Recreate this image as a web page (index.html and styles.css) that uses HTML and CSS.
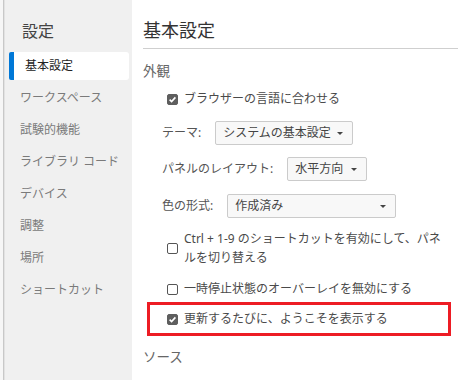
FILE: index.html
```html
<!DOCTYPE html>
<html>
  <head>
    <meta charset="utf-8">
    <title>設定</title>
    <link rel="stylesheet" href="styles.css">
  </head>
  <body>
    <div class="edge"></div>

    <nav class="sidebar">
      <h2 class="side-title">設定</h2>
      <ul class="side-list">
        <li class="side-item active">基本設定</li>
        <li class="side-item">ワークスペース</li>
        <li class="side-item">試験的機能</li>
        <li class="side-item">ライブラリ コード</li>
        <li class="side-item">デバイス</li>
        <li class="side-item">調整</li>
        <li class="side-item">場所</li>
        <li class="side-item">ショートカット</li>
      </ul>
    </nav>

    <main class="main">
      <h1 class="main-title">基本設定</h1>

      <h3 class="section">外観</h3>

      <div class="row row-first">
        <span class="box checked"><svg viewBox="0 0 11 11"><path d="M2.6 5.6 L4.6 7.6 L8.4 3.4" /></svg></span>
        <span class="text">ブラウザーの言語に合わせる</span>
      </div>

      <div class="row row-field">
        <span class="label">テーマ:</span>
        <div class="select select-theme"><span>システムの基本設定</span><i class="caret"></i></div>
      </div>

      <div class="row row-field">
        <span class="label">パネルのレイアウト:</span>
        <div class="select select-layout"><span>水平方向</span><i class="caret"></i></div>
      </div>

      <div class="row row-field row-color">
        <span class="label">色の形式:</span>
        <div class="select select-color"><span>作成済み</span><i class="caret"></i></div>
      </div>

      <div class="row row-wrap">
        <span class="box"></span>
        <span class="text">Ctrl + 1-9 のショートカットを有効にして、パネ<br>ルを切り替える</span>
      </div>

      <div class="row row-pause">
        <span class="box"></span>
        <span class="text">一時停止状態のオーバーレイを無効にする</span>
      </div>

      <div class="highlight">
        <span class="box checked"><svg viewBox="0 0 11 11"><path d="M2.6 5.6 L4.6 7.6 L8.4 3.4" /></svg></span>
        <span class="text">更新するたびに、ようこそを表示する</span>
      </div>

      <h3 class="section section-source">ソース</h3>
    </main>
  </body>
</html>
```

FILE: styles.css
```css
html, body {
  margin: 0;
  height: 380px;
  overflow: hidden;
}
body {
  display: flex;
  background: #fff;
  font-family: "Noto Sans", "Noto Sans CJK JP", sans-serif;
  font-size: 12px;
  color: #4a4a4a;
}
.edge {
  width: 3px;
  background: #f6f6f6;
  border-right: 1px solid #c8c8c8;
  flex-shrink: 0;
}

/* sidebar */
.sidebar {
  width: 120px;
  flex-shrink: 0;
  background: #f0f0f0;
  padding: 0 3px 0 4px;
  border-left: 1px solid #e2e2e2;
}
.side-title {
  margin: 0;
  padding: 19px 0 0 13px;
  height: 33px;
  box-sizing: border-box;
  font-size: 16px;
  line-height: 24px;
  font-weight: normal;
  color: #444;
}
.side-list {
  list-style: none;
  margin: 0;
  padding: 0;
  display: flex;
  flex-direction: column;
  gap: 4px;
  margin-top: 19px;
}
.side-item {
  height: 28px;
  line-height: 28px;
  padding-left: 11px;
  color: #7a7a7a;
  border-radius: 2px;
  white-space: nowrap;
}
.side-item.active {
  background: #fff;
  color: #222;
  border-left: 5px solid #0078d7;
  border-radius: 2px 3px 3px 2px;
}

/* main panel */
.main {
  flex: 1;
  padding-left: 11px;
}
.main-title {
  margin: 0;
  padding-top: 18px;
  padding-bottom: 6px;
  line-height: 24px;
  font-size: 18px;
  font-weight: normal;
  color: #333;
  border-bottom: 1px solid #cfcfcf;
}
.section {
  margin: 12px 0 0;
  font-size: 13.5px;
  line-height: 20px;
  font-weight: normal;
  color: #666;
}
.section-source {
  margin-top: 11px;
}
.row {
  display: flex;
  align-items: center;
  padding-left: 19px;
  line-height: 20px;
}
.row-first {
  margin-top: 8px;
}
.row-field {
  margin-top: 12px;
  height: 24px;
}
.row-color {
  margin-top: 13px;
}
.row-wrap {
  margin-top: 11px;
  line-height: 19px;
  white-space: nowrap;
}
.row-pause {
  margin-top: 12px;
}
.label {
  color: #555;
  margin-right: 14px;
}

.box {
  width: 11px;
  height: 11px;
  box-sizing: border-box;
  border: 1px solid #555;
  border-radius: 2px;
  background: #fff;
  margin-left: 5px;
  margin-right: 6px;
  flex-shrink: 0;
  display: flex;
}
.box.checked {
  background: #5e5e5e;
  border-color: #5e5e5e;
}
.box svg {
  width: 11px;
  height: 11px;
  margin: -1px;
}
.box path {
  fill: none;
  stroke: #fff;
  stroke-width: 1.6;
}

.select {
  display: flex;
  align-items: center;
  justify-content: space-between;
  height: 24px;
  box-sizing: border-box;
  border: 1px solid #cbcbcb;
  border-radius: 2px;
  background: #f8f8f8;
  padding: 0 9px 0 7px;
  color: #444;
}
.select-theme {
  width: 138px;
}
.select-layout {
  width: 80px;
}
.select-color {
  width: 169px;
}
.caret {
  width: 0;
  height: 0;
  border-left: 3px solid transparent;
  border-right: 3px solid transparent;
  border-top: 3px solid #444;
}

.highlight {
  display: flex;
  align-items: center;
  margin: 3px 7px 0 4px;
  height: 34px;
  box-sizing: border-box;
  border: 3px solid #ed1c24;
  padding-left: 12px;
  line-height: 20px;
}
```
